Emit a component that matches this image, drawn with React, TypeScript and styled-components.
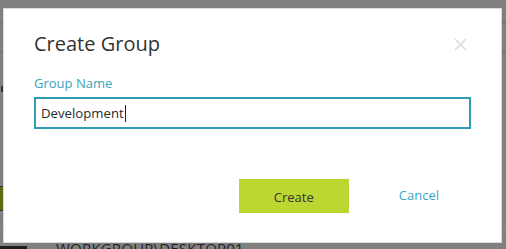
import React from "react";
import styled, { createGlobalStyle } from "styled-components";

const Global = createGlobalStyle`
  html, body { margin: 0; padding: 0; }
  body { width: 506px; height: 249px; overflow: hidden; background: #808080; font-family: "Open Sans", "Noto Sans", sans-serif; }
`;

const Page = styled.div`
  position: relative;
  width: 506px;
  height: 249px;
  overflow: hidden;
  background: #808080;
`;

const BgRule = styled.div<{ $top: number; $color: string }>`
  position: absolute;
  left: 0;
  right: 0;
  top: ${(p) => p.$top}px;
  height: 1px;
  background: ${(p) => p.$color};
`;

const BgTab = styled.div`
  position: absolute;
  left: 0;
  top: 186px;
  width: 4px;
  height: 23px;
  background: #5f6a14;
  border-top: 1px solid #333;
  border-bottom: 1px solid #333;
`;

const BgDot = styled.div`
  position: absolute;
  left: 1px;
  top: 86px;
  width: 2px;
  height: 6px;
  background: #333;
`;

const BgHost = styled.div`
  position: absolute;
  left: 56px;
  top: 238px;
  font-size: 15px;
  color: #222;
  letter-spacing: 0.2px;
`;

const BgBlock = styled.div`
  position: absolute;
  left: 0;
  top: 246px;
  width: 27px;
  height: 3px;
  background: #1e1e1e;
`;

const Modal = styled.div`
  position: absolute;
  left: 3px;
  top: 8px;
  width: 497px;
  height: 233px;
  background: #fff;
  border: 1px solid #d9d9d9;
  display: flex;
  flex-direction: column;
  box-sizing: content-box;
`;

const Header = styled.div`
  display: flex;
  align-items: center;
  justify-content: space-between;
  padding: 20px 34px 0 30px;
  height: 30px;
`;

const Title = styled.h2`
  margin: 0;
  font-size: 20px;
  font-weight: 400;
  color: #333;
  line-height: 30px;
`;

const Close = styled.button`
  border: 0;
  background: none;
  padding: 0;
  width: 14px;
  height: 14px;
  display: flex;
  align-items: center;
  justify-content: center;
  cursor: pointer;
`;

const Body = styled.div`
  display: flex;
  flex-direction: column;
  padding: 15px 30px 0 30px;
  gap: 5px;
`;

const Label = styled.label`
  font-size: 13px;
  line-height: 18px;
  color: #3ba3bd;
`;

const Input = styled.div`
  box-sizing: border-box;
  width: 437px;
  height: 32px;
  border: 2px solid #2f9cb3;
  padding: 0 5px;
  display: flex;
  align-items: center;
  font-size: 13.2px;
  color: #2a2a2a;
`;

const Caret = styled.span`
  display: inline-block;
  width: 1px;
  height: 17px;
  background: #222;
  margin-left: 1px;
`;

const Footer = styled.div`
  display: flex;
  justify-content: flex-end;
  align-items: center;
  padding: 50px 62px 0 0;
  gap: 50px;
`;

const PrimaryButton = styled.button`
  width: 110px;
  height: 34px;
  border: 0;
  background: #bcd632;
  color: #333;
  font-family: inherit;
  font-size: 13px;
  padding: 0;
  padding-top: 2px;
`;

const LinkButton = styled.button`
  border: 0;
  background: none;
  padding: 0;
  font-family: inherit;
  font-size: 13px;
  color: #3aa6c9;
  margin-bottom: 2px;
`;

export default function App() {
  return (
    <Page>
      <Global />
      <BgRule $top={22} $color="#6a6a6a" />
      <BgRule $top={52} $color="#6a6a6a" />
      <BgRule $top={228} $color="#8c8c8c" />
      <BgDot />
      <BgTab />
      <BgHost>WORKGROUP\DESKTOP01</BgHost>
      <BgBlock />
      <Modal>
        <Header>
          <Title>Create Group</Title>
          <Close aria-label="Close">
            <svg width="13" height="13" viewBox="0 0 13 13">
              <path d="M1 1L12 12M12 1L1 12" stroke="#dcdcdc" strokeWidth="1.6" />
            </svg>
          </Close>
        </Header>
        <Body>
          <Label>Group Name</Label>
          <Input>
            Development<Caret />
          </Input>
        </Body>
        <Footer>
          <PrimaryButton>Create</PrimaryButton>
          <LinkButton>Cancel</LinkButton>
        </Footer>
      </Modal>
    </Page>
  );
}
